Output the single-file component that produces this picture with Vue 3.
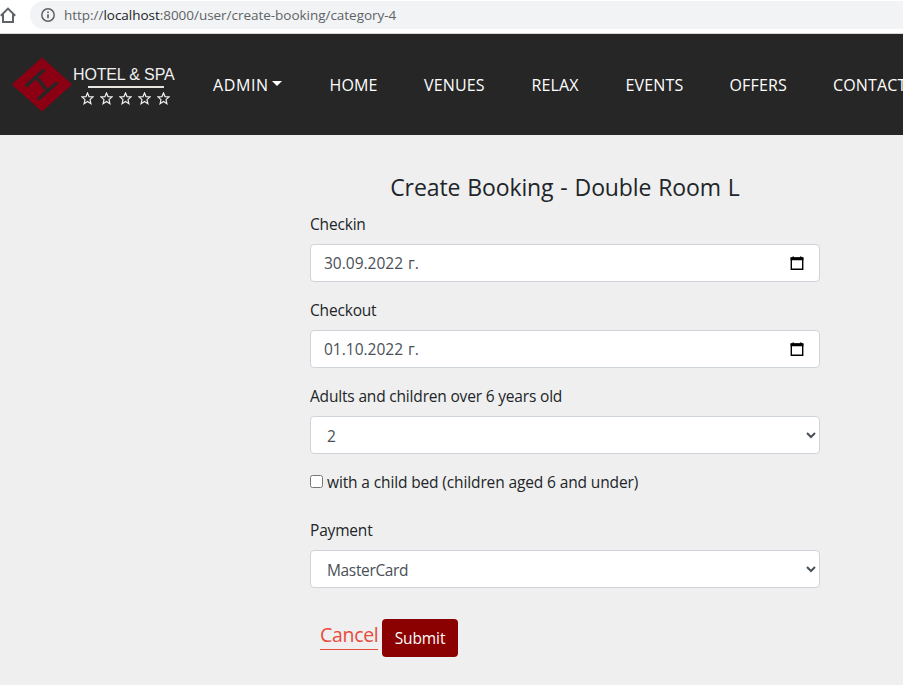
<script setup>
import { ref } from 'vue'

const links = ['HOME', 'VENUES', 'RELAX', 'EVENTS', 'OFFERS', 'CONTACT']
const checkin = ref('30.09.2022 г.')
const checkout = ref('01.10.2022 г.')
const guests = ref('2')
const childBed = ref(false)
const payment = ref('MasterCard')
</script>

<template>
  <div class="page">
    <div class="browser">
      <svg class="home" width="18" height="30" viewBox="0 0 18 30">
        <path d="M.8 15.8 8 8.6l7.200 7.200M3 14.200V22h10v-7.800" fill="none" stroke="#5f6368" stroke-width="2" />
      </svg>
      <div class="address">
        <svg width="16" height="16" viewBox="0 0 16 16">
          <circle cx="8" cy="8" r="6.200" fill="none" stroke="#5f6368" stroke-width="1.500" />
          <path d="M8 7.200v4M8 4.500v1.600" stroke="#5f6368" stroke-width="1.700" />
        </svg>
        <span class="url">http://<b>localhost</b>:8000/user/create-booking/category-4</span>
      </div>
    </div>

    <nav class="navbar">
      <a class="brand">
        <svg class="diamond" width="62" height="56" viewBox="0 0 62 56">
          <path d="M31 .5 61 27.500 31 54.500.8 27.500Z" fill="#8b0013" />
          <path d="M15.500 28.500 32.500 13.500M28 41.500 45.200 26.500M26 21 36.500 34" fill="none" stroke="#262626" stroke-width="3.400" stroke-linecap="round" />
        </svg>
        <span class="brand-side">
          <span class="brand-name">HOTEL &amp; SPA</span>
          <span class="brand-line"></span>
          <span class="stars">
            <svg v-for="n in 5" :key="n" width="13" height="13" viewBox="0 0 13 13">
              <path d="M6.500 1 8 4.600l4 .3-3 2.700.9 4.100-3.400-2.200-3.400 2.200.9-4.100-3-2.700L5 4.600Z" fill="none" stroke="#f0f0f0" stroke-width="1.200" />
            </svg>
          </span>
        </span>
      </a>
      <div class="links">
        <a class="link admin"><span>ADMIN</span><i class="caret"></i></a>
        <a v-for="l in links" :key="l" class="link">{{ l }}</a>
      </div>
    </nav>

    <form class="form" @submit.prevent>
      <h4 class="title">Create Booking - Double Room L</h4>

      <label class="label">Checkin</label>
      <div class="control date">
        <input v-model="checkin" type="text" />
        <svg width="14" height="15" viewBox="0 0 14 15">
          <path d="M1.300 2h11.400v11.300H1.300Z" fill="none" stroke="#000" stroke-width="1.400" />
          <path d="M.6 1.500h12.800V4.300H.6ZM2.500.5H4V2H2.500ZM10 .5h1.500V2H10Z" />
        </svg>
      </div>

      <label class="label">Checkout</label>
      <div class="control date">
        <input v-model="checkout" type="text" />
        <svg width="14" height="15" viewBox="0 0 14 15">
          <path d="M1.300 2h11.400v11.300H1.300Z" fill="none" stroke="#000" stroke-width="1.400" />
          <path d="M.6 1.500h12.800V4.300H.6ZM2.500.5H4V2H2.500ZM10 .5h1.500V2H10Z" />
        </svg>
      </div>

      <label class="label">Adults and children over 6 years old</label>
      <select v-model="guests" class="control select">
        <option>1</option>
        <option>2</option>
      </select>

      <label class="check">
        <input v-model="childBed" type="checkbox" />
        <span>with a child bed (children aged 6 and under)</span>
      </label>

      <label class="label">Payment</label>
      <select v-model="payment" class="control select">
        <option>MasterCard</option>
        <option>Visa</option>
      </select>

      <div class="actions">
        <a class="cancel">Cancel</a>
        <button class="submit" type="submit">Submit</button>
      </div>
    </form>
  </div>
</template>

<style>
body {
  background: #efefef;
  overflow: hidden;
}
</style>

<style scoped>
.page,
.page * {
  box-sizing: border-box;
}
.page {
  width: 100%;
  height: 685px;
  overflow: hidden;
  background: #efefef;
  color: #212529;
  font-family: "Open Sans", "Noto Sans", sans-serif;
  font-size: 15.5px;
  line-height: 24px;
}
.browser {
  display: flex;
  height: 34px;
  background: #fff;
  border-bottom: 1px solid #d5d8d5;
}
.home {
  flex: none;
  margin-right: 12px;
}
.address {
  display: flex;
  align-items: center;
  flex: 1;
  height: 28px;
  margin-top: 1px;
  padding-left: 10px;
  border-radius: 14px 0 0 14px;
  background: #f1f3f4;
}
.url {
  margin-left: 8px;
  color: #5f6368;
  font-size: 13.5px;
  letter-spacing: -0.03px;
  white-space: nowrap;
}
.url b {
  color: #202124;
  font-weight: 400;
}
.navbar {
  display: flex;
  align-items: center;
  height: 101px;
  padding-left: 11px;
  background: #262626;
}
.brand {
  display: flex;
  align-items: center;
  flex: none;
  width: 202px;
}
.diamond {
  flex: none;
}
.brand-side {
  display: flex;
  flex-direction: column;
  margin-top: 1px;
}
.brand-name {
  color: #f0f0f0;
  font-family: "Liberation Sans", sans-serif;
  font-size: 16px;
  letter-spacing: -0.15px;
  line-height: 20px;
  white-space: nowrap;
}
.brand-line {
  width: 76px;
  height: 1.5px;
  margin: 1px 0 4px 15px;
  background: #e8e4e0;
}
.stars {
  display: flex;
  gap: 6px;
  margin-left: 8px;
}
.links {
  display: grid;
  grid-template-columns: 116.5px 94.5px 107.5px 94px 104px 103.5px 90px;
  flex: none;
}
.link {
  display: flex;
  align-items: center;
  color: #fff;
  font-size: 16px;
  letter-spacing: 0.15px;
  white-space: nowrap;
}
.admin {
  letter-spacing: 0.6px;
}
.caret {
  margin: -3px 0 0 3px;
  border: 5px solid transparent;
  border-top-color: #fff;
  border-bottom: 0;
}
.form {
  display: flex;
  flex-direction: column;
  width: 510px;
  margin-left: 310px;
  padding-top: 37px;
}
.title {
  margin: 0 0 9px;
  font-size: 23px;
  font-weight: 400;
  letter-spacing: -0.1px;
  word-spacing: 1px;
  line-height: 31px;
  text-align: center;
  white-space: nowrap;
}
.label {
  height: 24px;
  margin-bottom: 8px;
  letter-spacing: -0.18px;
}
.control {
  width: 510px;
  height: 38px;
  margin: 0 0 16px;
  border: 1px solid #ced4da;
  border-radius: 4px;
  background: #fff;
  color: #495057;
}
.date {
  display: flex;
  align-items: center;
  padding: 0 15px 0 13px;
}
.date input {
  flex: 1;
  padding: 0;
  border: 0;
  outline: 0;
  background: none;
  color: inherit;
  font: inherit;
  font-size: 15.5px;
  word-spacing: 1px;
}
.select {
  padding: 7px 13px 5px 12px;
  font-family: inherit;
  font-size: 15.5px;
  letter-spacing: -0.35px;
}
.check {
  display: flex;
  height: 24px;
  margin-bottom: 24px;
  letter-spacing: -0.13px;
  white-space: nowrap;
}
.check input {
  flex: none;
  width: 13px;
  height: 13px;
  margin: 5px 4px 0 0;
}
.actions {
  display: flex;
  margin: 15px 0 0 10px;
}
.cancel {
  width: 58px;
  height: 31px;
  margin-right: 4px;
  border-bottom: 1px solid #e74c3c;
  color: #e74c3c;
  font-size: 19.5px;
  letter-spacing: -0.3px;
  line-height: 32px;
  white-space: nowrap;
}
.submit {
  width: 76px;
  height: 38px;
  padding: 0;
  border: 0;
  border-radius: 4px;
  background: #8b0000;
  color: #fff;
  font-family: inherit;
  font-size: 15.5px;
  letter-spacing: -0.1px;
}
</style>
